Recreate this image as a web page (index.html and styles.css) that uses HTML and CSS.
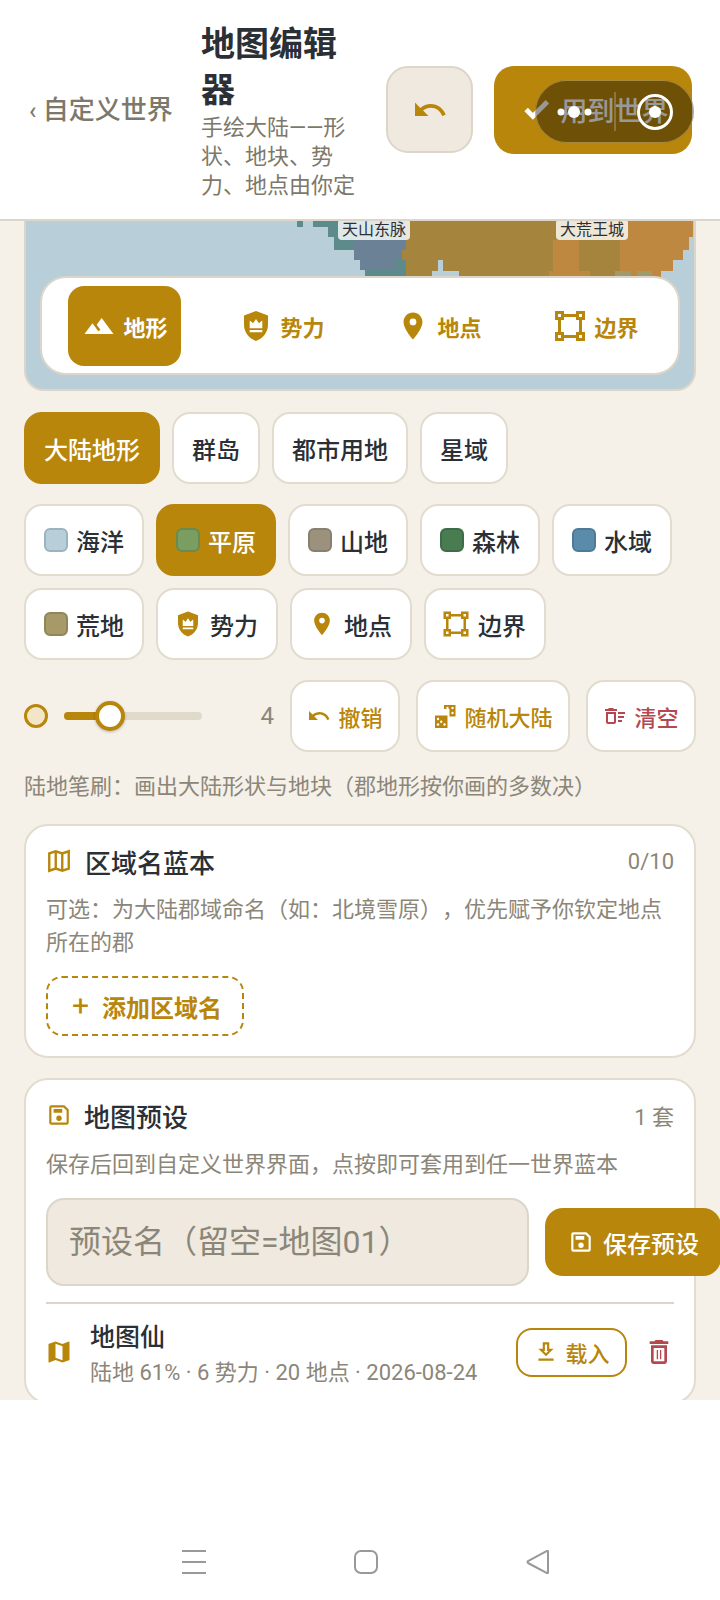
FILE: index.html
```html
<!DOCTYPE html>
<html lang="zh-CN">
<head>
    <meta charset="UTF-8">
    <meta name="viewport" content="width=device-width, initial-scale=1.0">
    <title>地图编辑器</title>
    <link rel="stylesheet" href="styles.css">
</head>
<body>
    <!-- Shared icons -->
    <svg class="defs" aria-hidden="true">
        <symbol id="i-undo" viewBox="0 0 24 24"><path d="M12.5 8c-2.65 0-5.05.99-6.9 2.6L2 7v9h9l-3.62-3.62c1.39-1.16 3.16-1.88 5.12-1.88 3.54 0 6.55 2.31 7.6 5.5l2.37-.78C21.08 11.03 17.15 8 12.5 8z"/></symbol>
        <symbol id="i-terrain" viewBox="-1.650 -1.650 27.300 27.300"><path d="M14 6l-3.75 5 2.85 3.8-1.6 1.2C9.81 13.75 7 10 7 10l-6 8h22L14 6z"/></symbol>
        <symbol id="i-shield" viewBox="0 0 24 24"><path fill-rule="evenodd" d="M12 2l8 3v6.2c0 4.9-3.3 9.2-8 10.8-4.700-1.600-8-5.900-8-10.800V5.000zM7.800 8.400v5.100h8.400V8.400l-2.300 1.800L12 7.300l-1.900 2.900zM7.800 14.700v1.500h8.400v-1.500z"/></symbol>
        <symbol id="i-pin" viewBox="-1.330 -1.330 26.670 26.670"><path fill-rule="evenodd" d="M12 2C8.130 2 5 5.130 5 9c0 5.250 7 13 7 13s7-7.750 7-13c0-3.870-3.130-7-7-7zm0 9.500a2.500 2.500 0 1 1 0-5 2.500 2.500 0 0 1 0 5z"/></symbol>
        <symbol id="i-bounds" viewBox="0 0 24 24">
            <path fill="none" stroke="currentColor" stroke-width="2" d="M7 5h10M7 19h10M5 7v10M19 7v10"/>
            <path fill="none" stroke="currentColor" stroke-width="2" d="M3 3h4v4H3zM17 3h4v4h-4zM3 17h4v4H3zM17 17h4v4h-4z"/>
        </symbol>
        <symbol id="i-save" viewBox="0 0 24 24"><path fill-rule="evenodd" d="M17 3H5a2 2 0 0 0-2 2v14a2 2 0 0 0 2 2h14a2 2 0 0 0 2-2V7l-4-4zm2 16H5V5h11.170L19 7.830V19zm-7-6.500a2.500 2.500 0 1 0 0 5 2.500 2.500 0 0 0 0-5zM7 6.500h8v3.500H7z"/></symbol>
    </svg>

    <div class="screen">
        <header class="topbar">
            <div class="back"><span class="chev">‹</span> 自定义世界</div>
            <div class="heading">
                <h1>地图编辑器</h1>
                <p>手绘大陆——形状、地块、势力、地点由你定</p>
            </div>
            <button class="undo-btn"><svg class="ic-undo"><use href="#i-undo"/></svg></button>
            <button class="apply-btn">
                <svg class="ic-check" viewBox="0 0 24 24"><path d="M9 16.170 4.830 12l-1.420 1.410L9 19 21 7l-1.410-1.410z" stroke="currentColor" stroke-width="2"/></svg>
                用到世界
            </button>
            <!-- floating window handle that sits on top of the app -->
            <div class="float-pill">
                <svg viewBox="0 0 159 63">
                    <circle cx="26" cy="32" r="3.500" fill="#fff"/>
                    <circle cx="39" cy="32" r="6" fill="#fff"/>
                    <circle cx="53" cy="32" r="3.500" fill="#fff"/>
                    <path d="M80 12v39" stroke="#a89a80" stroke-width="1"/>
                    <circle cx="120" cy="32" r="16.500" fill="none" stroke="#fff" stroke-width="3"/>
                    <circle cx="120" cy="32" r="6" fill="#fff"/>
                </svg>
            </div>
        </header>

        <main class="content">
            <section class="map">
                <svg class="terrain" viewBox="26 221 668 168">
                    <rect x="297" y="221" width="6" height="6" fill="#5d8a8a"/>
                    <path fill="#5d8a8a" d="M313 221H406V277H365V270H360V260H354V250H334V237H328V227H313Z"/>
                    <path fill="#6b8196" d="M354 240H406V260H395V270H360V260H354Z"/>
                    <path fill="#a5853e" d="M406 221H620V277H406V260H402V250H406Z"/>
                    <rect x="438" y="260" width="5" height="17" fill="#b8ced8"/>
                    <rect x="432" y="271" width="27" height="6" fill="#b8ced8"/>
                    <path fill="#bf8840" d="M553 240H579V271H590V277H549V271H553Z"/>
                    <path fill="#bf8840" d="M620 221H693V237H689V250H683V260H673V271H661V277H620Z"/>
                    <rect x="615" y="271" width="16" height="6" fill="#a09a6a"/>
                    <rect x="637" y="271" width="15" height="6" fill="#a09a6a"/>
                </svg>
                <span class="place place-mtn">天山东脉</span>
                <span class="place place-city">大荒王城</span>
                <nav class="toolbar">
                    <div class="tab active"><svg class="ic"><use href="#i-terrain"/></svg>地形</div>
                    <div class="tab"><svg class="ic"><use href="#i-shield"/></svg>势力</div>
                    <div class="tab"><svg class="ic"><use href="#i-pin"/></svg>地点</div>
                    <div class="tab"><svg class="ic"><use href="#i-bounds"/></svg>边界</div>
                </nav>
            </section>

            <div class="chips kinds">
                <button class="chip active">大陆地形</button>
                <button class="chip">群岛</button>
                <button class="chip">都市用地</button>
                <button class="chip">星域</button>
            </div>

            <div class="chips brushes">
                <button class="chip"><i class="swatch sea"></i>海洋</button>
                <button class="chip active"><i class="swatch plain"></i>平原</button>
                <button class="chip"><i class="swatch mountain"></i>山地</button>
                <button class="chip"><i class="swatch forest"></i>森林</button>
                <button class="chip"><i class="swatch water"></i>水域</button>
                <button class="chip"><i class="swatch waste"></i>荒地</button>
                <button class="chip with-icon"><svg class="ic-chip"><use href="#i-shield"/></svg>势力</button>
                <button class="chip with-icon"><svg class="ic-chip"><use href="#i-pin"/></svg>地点</button>
                <button class="chip with-icon"><svg class="ic-chip"><use href="#i-bounds"/></svg>边界</button>
            </div>

            <div class="brush-row">
                <i class="brush-dot"></i>
                <div class="slider"><div class="slider-fill"></div><div class="slider-thumb"></div></div>
                <span class="brush-size">4</span>
                <button class="action"><svg class="ic-sm"><use href="#i-undo"/></svg>撤销</button>
                <button class="action wide">
                    <svg class="ic-sm" viewBox="0 0 24 24">
                        <path d="M2 11.500h12.500V24H2z"/>
                        <path d="M11 5V1h11.500v11.500h-6V5z"/>
                        <g fill="#fff"><circle cx="5" cy="15" r="1.200"/><circle cx="8.200" cy="17.800" r="1.200"/><circle cx="11.500" cy="20.500" r="1.200"/><circle cx="5" cy="20.500" r="1.200"/><circle cx="19.500" cy="4" r="1.200"/><circle cx="19.500" cy="9" r="1.200"/><circle cx="14.500" cy="4" r="1.200"/></g>
                    </svg>
                    随机大陆
                </button>
                <button class="action danger">
                    <svg class="ic-sm" viewBox="0 0 24 24"><path fill-rule="evenodd" d="M15 16h4v2h-4zm0-8h7v2h-7zm0 4h6v2h-6zM3 18c0 1.100.9 2 2 2h6c1.100 0 2-.9 2-2V8H3v10zm2-8h6v8H5v-8zm5-6H6L5 5H2v2h12V5h-3z"/></svg>
                    清空
                </button>
            </div>

            <p class="hint">陆地笔刷：画出大陆形状与地块（郡地形按你画的多数决）</p>

            <section class="card">
                <div class="card-head">
                    <svg class="ic-head outline" viewBox="0 0 24 24"><path d="M3 5l6-2 6 2 6-2v16l-6 2-6-2-6 2zM9 3v16M15 5v16"/></svg>
                    <h2>区域名蓝本</h2>
                    <span class="count">0/10</span>
                </div>
                <p class="desc">可选：为大陆郡域命名（如：北境雪原），优先赋予你钦定地点所在的郡</p>
                <button class="add-btn"><span class="plus">+</span>添加区域名</button>
            </section>

            <section class="card presets">
                <div class="card-head">
                    <svg class="ic-head"><use href="#i-save"/></svg>
                    <h2>地图预设</h2>
                    <span class="count">1 套</span>
                </div>
                <p class="desc">保存后回到自定义世界界面，点按即可套用到任一世界蓝本</p>
                <div class="save-row">
                    <input class="name-input" type="text" placeholder="预设名（留空=地图01）">
                    <button class="save-btn"><svg class="ic-save"><use href="#i-save"/></svg>保存预设</button>
                </div>
                <div class="preset">
                    <svg class="ic-map" viewBox="0 0 24 24"><path fill-rule="evenodd" d="M20.500 3l-.16.03L15 5.100 9 3 3.360 4.900c-.21.07-.36.25-.36.48V20.500c0 .28.22.5.5.5l.16-.03L9 18.900l6 2.100 5.640-1.900c.21-.07.36-.25.36-.48V3.500c0-.28-.22-.5-.5-.5zM15 19l-6-2.110V5l6 2.110V19z"/></svg>
                    <div class="preset-text">
                        <div class="preset-name">地图仙</div>
                        <div class="preset-meta">陆地 61% · 6 势力 · 20 地点 · 2026-08-24</div>
                    </div>
                    <button class="load-btn">
                        <svg class="ic-load" viewBox="0 0 24 24"><path fill-rule="evenodd" d="M5 20h14v-2H5v2zM19 9h-4V3H9v6H5l7 7 7-7zm-8 2V5h2v6h1.170L12 13.170 9.830 11H11z"/></svg>
                        载入
                    </button>
                    <svg class="ic-trash" viewBox="0 0 24 24"><path fill-rule="evenodd" d="M6 19c0 1.100.9 2 2 2h8c1.100 0 2-.9 2-2V7H6v12zM8 9h8v10H8V9zm7.500-5l-1-1h-5l-1 1H5v2h14V4z"/><path d="M10.300 10.500h1v7h-1zM12.700 10.500h1v7h-1z"/></svg>
                </div>
            </section>
        </main>
    </div>

    <!-- System navigation -->
    <footer class="navbar">
        <svg viewBox="0 0 24 24"><path d="M0 1h24M0 12h24M0 23h24"/></svg>
        <svg viewBox="0 0 24 24"><rect x="1" y="1" width="22" height="22" rx="6"/></svg>
        <svg viewBox="0 0 24 24"><path d="M22 1.500v21c0 .6-.5.9-1 .6L2 13c-.7-.4-.7-1.400 0-1.800L21 1c.5-.3 1 0 1 .5z"/></svg>
    </footer>
</body>
</html>
```

FILE: styles.css
```css
* {
    box-sizing: border-box;
}
body {
    margin: 0;
    width: 720px;
    height: 1600px;
    overflow: hidden;
    background: #fff;
    font-family: Roboto, "Noto Sans CJK SC", sans-serif;
    color: #2b2f36;
    text-spacing-trim: space-all;
}
button {
    font-family: inherit;
    padding: 0;
}
.defs {
    position: absolute;
    width: 0;
    height: 0;
}
.screen {
    height: 1400px;
    overflow: hidden;
    background: #f5f0e8;
}

/* top bar */
.topbar {
    position: relative;
    z-index: 2;
    display: flex;
    align-items: center;
    height: 221px;
    padding-left: 28px;
    background: #fff;
    border-bottom: 2px solid #dcd5c8;
}
.back {
    width: 145px;
    margin-right: 28px;
    padding: 0 0 4px 1px;
    font-size: 26px;
    font-weight: 500;
    color: #7d7869;
    white-space: nowrap;
}
.chev {
    font-size: 24px;
}
.heading {
    width: 157px;
    margin-right: 28px;
    padding-top: 2px;
}
.heading h1 {
    margin: 0;
    font-size: 34px;
    line-height: 46px;
    font-weight: 700;
}
.heading p {
    margin: 0;
    font-size: 22px;
    line-height: 29px;
    color: #7d7869;
}
.undo-btn {
    width: 87px;
    height: 87px;
    margin-right: 21px;
    display: flex;
    align-items: center;
    justify-content: center;
    background: #efe9df;
    border: 2px solid #dcd5c8;
    border-radius: 22px;
}
.ic-undo {
    width: 36px;
    height: 36px;
    fill: #b8860b;
}
.apply-btn {
    width: 198px;
    height: 88px;
    display: flex;
    align-items: center;
    justify-content: center;
    gap: 10px;
    padding-left: 4px;
    background: #b8860b;
    border: 0;
    border-radius: 20px;
    color: #fff;
    font-size: 27px;
    font-weight: 500;
}
.ic-check {
    width: 29px;
    height: 29px;
    fill: currentColor;
}
.float-pill {
    position: absolute;
    left: 535px;
    top: 80px;
    width: 159px;
    height: 63px;
    border-radius: 32px;
    background: rgba(0, 0, 0, 0.4);
    box-shadow: inset 0 0 0 1px rgba(225, 195, 120, 0.5);
}
.float-pill svg {
    display: block;
}

/* page body */
.content {
    padding: 0 24px;
}
.map {
    position: relative;
    height: 170px;
    padding: 55px 14px 0;
    background: #b8ced8;
    border: 2px solid #dcd5c8;
    border-top: 0;
    border-radius: 0 0 20px 20px;
    overflow: hidden;
}
.terrain {
    position: absolute;
    left: 0;
    top: 0;
    width: 668px;
    height: 168px;
}
.place {
    position: absolute;
    top: -2px;
    height: 21px;
    padding: 0 4px;
    background: rgba(255, 255, 255, 0.8);
    border-radius: 4px;
    font-size: 16px;
    line-height: 21px;
    color: #2b2f36;
}
.place-mtn {
    left: 312px;
}
.place-city {
    left: 530px;
}
.toolbar {
    position: relative;
    display: flex;
    align-items: center;
    gap: 44px;
    height: 99px;
    padding-left: 26px;
    background: #fff;
    border: 2px solid #dcd5c8;
    border-radius: 26px;
}
.tab {
    display: flex;
    align-items: center;
    justify-content: center;
    gap: 6px;
    width: 113px;
    height: 80px;
    border-radius: 16px;
    font-size: 22px;
    font-weight: 600;
    color: #b8860b;
}
.tab.active {
    background: #b8860b;
    color: #fff;
}
.ic {
    width: 36px;
    height: 36px;
    fill: currentColor;
}

/* chips */
.chips {
    display: flex;
    flex-wrap: wrap;
    gap: 12px;
    margin-top: 21px;
}
.brushes {
    margin-top: 20px;
}
.chip {
    display: flex;
    align-items: center;
    gap: 8px;
    height: 72px;
    padding: 0 18px;
    background: #fff;
    border: 2px solid #e2dccf;
    border-radius: 18px;
    font-size: 24px;
    font-weight: 500;
    color: #2b2f36;
}
.chip.active {
    background: #b8860b;
    border-color: #b8860b;
    color: #fff;
}
.chip.with-icon {
    gap: 7px;
    padding: 0 18px 0 15px;
}
.swatch {
    width: 24px;
    height: 24px;
    border-radius: 6px;
    border: 2px solid;
}
.sea { background: #b8ced8; border-color: #9ab4c0; }
.plain { background: #7a9e5f; border-color: #6a8a50; }
.mountain { background: #9c917c; border-color: #87806e; }
.forest { background: #4a7c52; border-color: #3f6c48; }
.water { background: #5b8bab; border-color: #4e7a98; }
.waste { background: #a89a68; border-color: #918558; }
.ic-chip {
    width: 30px;
    height: 30px;
    color: #b8860b;
    fill: #b8860b;
}

/* brush size and actions */
.brush-row {
    display: flex;
    align-items: center;
    margin-top: 20px;
    height: 72px;
}
.brush-dot {
    flex: none;
    width: 24px;
    height: 24px;
    background: #f3e6c8;
    border: 3px solid #b8860b;
    border-radius: 50%;
}
.slider {
    position: relative;
    flex: none;
    width: 138px;
    height: 8px;
    margin-left: 16px;
    background: #e0dacb;
    border-radius: 4px;
}
.slider-fill {
    width: 35%;
    height: 100%;
    background: #b8860b;
    border-radius: 4px;
}
.slider-thumb {
    position: absolute;
    left: 31px;
    top: -11px;
    width: 30px;
    height: 30px;
    background: #fff;
    border: 4px solid #b8860b;
    border-radius: 50%;
    box-shadow: 0 1px 3px rgba(0, 0, 0, 0.25);
}
.brush-size {
    width: 88px;
    padding-right: 16px;
    text-align: right;
    font-size: 24px;
    color: #8b8678;
}
.action {
    display: flex;
    align-items: center;
    justify-content: center;
    gap: 7px;
    height: 72px;
    width: 110px;
    margin-right: 16px;
    background: #fff;
    border: 2px solid #e2dccf;
    border-radius: 18px;
    font-size: 22px;
    font-weight: 500;
    color: #b8860b;
}
.action.wide {
    width: 154px;
}
.action:last-child {
    margin-right: 0;
}
.ic-sm {
    width: 24px;
    height: 24px;
    fill: currentColor;
}
.action.danger {
    color: #b5484f;
}
.hint {
    margin: 18px 0 0;
    font-size: 22px;
    line-height: 33px;
    color: #8b8678;
}

/* cards */
.card {
    margin-top: 21px;
    padding: 17px 20px 20px;
    background: #fff;
    border: 2px solid #e2dccf;
    border-radius: 24px;
}
.presets {
    margin-top: 20px;
    padding-bottom: 13px;
}
.card-head {
    display: flex;
    align-items: center;
    height: 36px;
}
.card-head h2 {
    margin: 0;
    font-size: 26px;
    font-weight: 500;
}
.count {
    margin-left: auto;
    font-size: 22px;
    color: #8b8678;
}
.ic-head {
    width: 26px;
    height: 26px;
    margin-right: 12px;
    fill: #b8860b;
}
.ic-head.outline {
    margin-right: 13px;
    fill: none;
    stroke: #b8860b;
    stroke-width: 2.200;
}
.desc {
    margin: 14px 0 0;
    font-size: 22px;
    line-height: 33px;
    color: #8b8678;
}
.presets .desc {
    margin-top: 15px;
}
.add-btn {
    display: flex;
    align-items: center;
    gap: 13px;
    height: 60px;
    margin-top: 17px;
    padding: 0 20px 0 24px;
    background: #fff;
    border: 2px dashed #b8860b;
    border-radius: 16px;
    font-size: 24px;
    font-weight: 600;
    color: #b8860b;
}
.plus {
    font-size: 30px;
    font-weight: 400;
    line-height: 1;
}
.save-row {
    display: flex;
    align-items: center;
    gap: 16px;
    margin-top: 17px;
}
.name-input {
    flex: 0 0 483px;
    height: 88px;
    padding: 0 21px;
    background: #efe9df;
    border: 2px solid #dcd5c8;
    border-radius: 18px;
    font-family: inherit;
    font-size: 32px;
}
.name-input::placeholder {
    color: #8b8678;
}
.save-btn {
    flex: 0 0 176px;
    display: flex;
    align-items: center;
    gap: 9px;
    height: 68px;
    padding-left: 23px;
    background: #b8860b;
    border: 0;
    border-radius: 18px;
    font-size: 24px;
    font-weight: 500;
    color: #fff;
    white-space: nowrap;
}
.ic-save {
    width: 26px;
    height: 26px;
    fill: currentColor;
}
.preset {
    display: flex;
    align-items: center;
    margin-top: 16px;
    padding-top: 15px;
    border-top: 2px solid #dcd5cd;
}
.ic-map {
    flex: none;
    width: 28px;
    height: 28px;
    margin: 0 17px 4px -1px;
    fill: #b8860b;
}
.preset-text {
    flex: 1;
}
.preset-name {
    font-size: 25px;
    font-weight: 500;
    line-height: 38px;
}
.preset-meta {
    font-size: 22px;
    line-height: 32px;
    color: #8b8678;
    white-space: nowrap;
}
.load-btn {
    flex: none;
    display: flex;
    align-items: center;
    justify-content: center;
    gap: 6px;
    width: 111px;
    height: 49px;
    margin: 0 16px 4px 0;
    background: #fff;
    border: 2px solid #b8860b;
    border-radius: 16px;
    font-size: 22px;
    font-weight: 500;
    color: #b8860b;
}
.ic-load {
    width: 26px;
    height: 26px;
    fill: currentColor;
}
.ic-trash {
    flex: none;
    width: 32px;
    height: 32px;
    margin: 0 -1px 4px 0;
    fill: #b5484f;
}

/* system bar */
.navbar {
    display: flex;
    justify-content: center;
    gap: 148px;
    height: 200px;
    padding: 150px 0 0 12px;
    background: #fff;
}
.navbar svg {
    width: 24px;
    height: 24px;
    fill: none;
    stroke: #999;
    stroke-width: 2;
}
```
